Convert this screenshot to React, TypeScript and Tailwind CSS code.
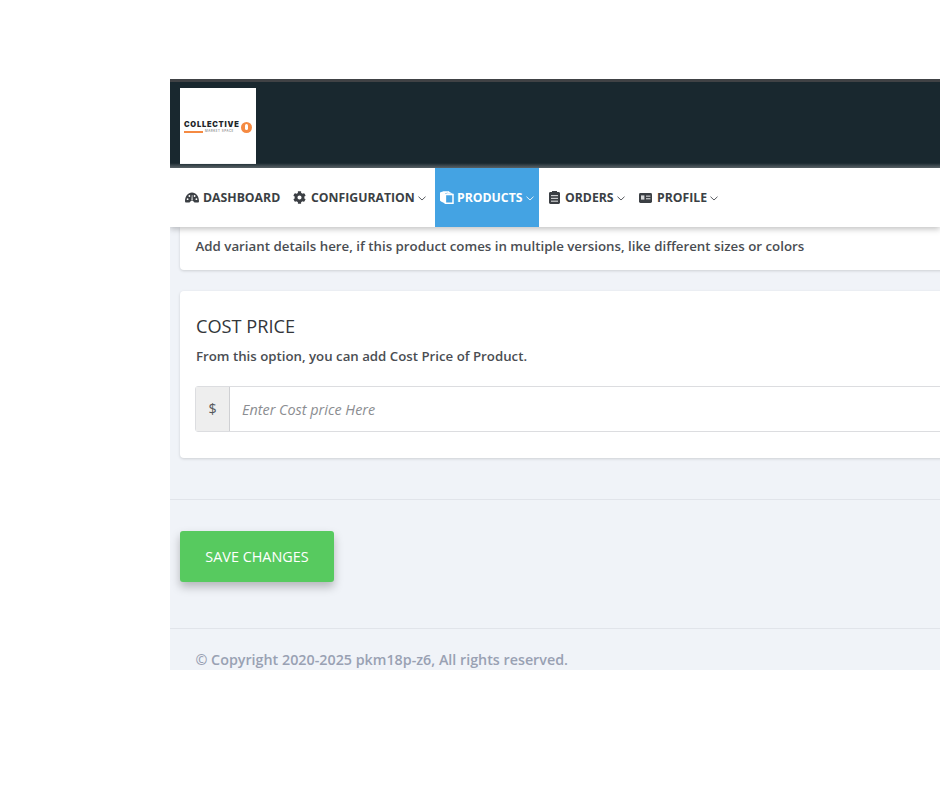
import { FaCog } from "react-icons/fa";

function DashIcon() {
  return (
    <svg viewBox="0 0 14 11" className="w-[14px] h-[11px]">
      <path d="M0 9.2C0 4.2 3 .4 7 .4s7 3.8 7 8.8c0 .9-.5 1.4-1.3 1.4H9.4C9.2 9.6 8.3 9 7 9s-2.2.6-2.4 1.6H1.3C.5 10.6 0 10.1 0 9.2z" fill="currentColor" />
      <circle cx="2.6" cy="7.2" r=".9" fill="#fff" />
      <circle cx="4.4" cy="4" r=".9" fill="#fff" />
      <circle cx="9.6" cy="4" r=".9" fill="#fff" />
      <circle cx="11.4" cy="7.2" r=".9" fill="#fff" />
      <path d="M6.4 8.6L6.9 3h.4l.4 5.6z" fill="#fff" />
    </svg>
  );
}

function BoxIcon() {
  return (
    <svg viewBox="0 0 14 13" className="w-[14px] h-[13px]">
      <path d="M0 1.6L3.4.2h5.2l.9.6-4.4 1.8v9.8L1 10.6 0 9.6z" fill="currentColor" />
      <path d="M5.4 3.4l7.6 0v8.8H5.4z" fill="none" stroke="currentColor" strokeWidth="1.5" />
      <path d="M8.6.4L13 2.8H6z" fill="currentColor" />
    </svg>
  );
}

function OrdersIcon() {
  return (
    <svg viewBox="0 0 11 13" className="w-[11px] h-[13px]">
      <path d="M3 0h5v1h1.6c.8 0 1.4.6 1.4 1.4v9.2c0 .8-.6 1.4-1.4 1.4H1.4C.6 13 0 12.4 0 11.6V2.4C0 1.6.6 1 1.4 1H3z" fill="currentColor" />
      <rect x="2" y="4" width="7" height="1.2" fill="#fff" opacity=".75" />
      <rect x="2" y="6.8" width="7" height="1.2" fill="#fff" opacity=".75" />
      <rect x="2" y="9.6" width="7" height="1.2" fill="#fff" opacity=".75" />
    </svg>
  );
}

function ProfileIcon() {
  return (
    <svg viewBox="0 0 13 10" className="w-[13px] h-[10px]">
      <rect width="13" height="10" rx="1.4" fill="currentColor" />
      <rect x="2" y="2.4" width="3.4" height="4.2" fill="#fff" opacity=".8" />
      <rect x="7" y="2.6" width="4.4" height="1.1" fill="#fff" opacity=".8" />
      <rect x="7" y="5.2" width="4.4" height="1.1" fill="#fff" opacity=".8" />
    </svg>
  );
}

function Caret() {
  return (
    <svg viewBox="0 0 8 5" fill="none" stroke="currentColor" strokeWidth="0.85" className="w-[8px] h-[5px] ml-[3px] mt-[2px] shrink-0">
      <polyline points="0.5 0.7 4 4 7.5 0.7" />
    </svg>
  );
}

const NAV = [
  { label: "DASHBOARD", icon: <DashIcon />, caret: false, active: false, cls: "w-[108px] pl-[5px]", box: "w-[18px]" },
  { label: "CONFIGURATION", icon: <FaCog className="w-[13px] h-[13px]" />, caret: true, active: false, cls: "w-[147px] pl-[5px]", box: "w-[18px]" },
  { label: "PRODUCTS", icon: <BoxIcon />, caret: true, active: true, cls: "w-[104px] pl-[5px]", box: "w-[17px]" },
  { label: "ORDERS", icon: <OrdersIcon />, caret: true, active: false, cls: "w-[90px] pl-[10px]", box: "w-[16px]" },
  { label: "PROFILE", icon: <ProfileIcon />, caret: true, active: false, cls: "w-[90px] pl-[10px]", box: "w-[18px]" },
];

function Logo() {
  return (
    <div className="w-[76px] h-[76px] bg-white flex flex-col justify-center pl-1 shrink-0">
      <div className="flex items-center gap-[1px] mt-[2px]">
        <div className="flex flex-col items-start w-[56px]">
          <span className="text-[7.5px] leading-[8px] font-black tracking-[0.75px] text-[#22262a] font-['Inter',sans-serif]">COLLECTIVE</span>
          <div className="flex items-center gap-[2px] mt-[1px]">
            <div className="w-[19px] h-[2px] bg-[#f58a42]" />
            <span className="text-[3px] leading-[3px] tracking-[0.5px] text-[#666] font-['Inter',sans-serif]">MARKET SPACE</span>
          </div>
        </div>
        <div className="w-[11px] h-[11px] rounded-full bg-[#f58a42] flex items-center justify-center">
          <div className="w-[3px] h-[6px] rounded-sm bg-white" />
        </div>
      </div>
    </div>
  );
}

export default function App() {
  return (
    <div className="w-[940px] h-[788px] overflow-hidden bg-white pt-[79px] pl-[170px] font-['Open_Sans',sans-serif]">
      <div className="w-[770px] h-[591px] overflow-hidden bg-[#f0f3f8] flex flex-col">
        {/* Top bar */}
        <header className="relative h-[89px] shrink-0 bg-[#19282f] border-t-[3px] border-[#404245] pl-[10px] pt-[6px]">
          <Logo />
          {/* soft fade where the bar meets the nav */}
          <div className="absolute left-0 right-0 bottom-0 h-[5px] bg-gradient-to-b from-transparent to-[#7c8387]/70" />
        </header>

        {/* Nav */}
        <nav className="relative z-10 h-[59px] shrink-0 bg-white shadow-[0_2px_6px_rgba(0,0,0,0.25)] flex pl-[10px]">
          {NAV.map((item) => (
            <div
              key={item.label}
              className={`${item.cls} flex items-center text-[12.25px] font-bold ${
                item.active ? "bg-[#44a3e3] text-white" : "text-[#3b3f44]"
              }`}
            >
              <span className={`${item.box} flex items-center shrink-0`}>{item.icon}</span>
              <span className="pt-[1px]">{item.label}</span>
              {item.caret && <Caret />}
            </div>
          ))}
        </nav>

        {/* Content */}
        <main className="flex-1 flex flex-col">
          <div className="ml-[10px] w-[800px] h-[43px] bg-white rounded-b-[4px] shadow-[0_1px_3px_rgba(0,0,0,0.15)] pl-[15.5px] pt-[9px] text-[13.3px] leading-[20px] font-semibold text-[#4a4d52]">
            Add variant details here, if this product comes in multiple versions, like different sizes or colors
          </div>

          <section className="ml-[10px] mt-[21px] w-[800px] h-[167px] bg-white rounded-[4px] shadow-[0_1px_3px_rgba(0,0,0,0.15)] pl-[15px] pt-[24px]">
            <h2 className="pl-[1px] text-[18.2px] leading-[22px] text-[#33363a]">COST PRICE</h2>
            <p className="pl-[1px] mt-[9px] text-[13.25px] leading-[20px] font-semibold text-[#4a4d52]">
              From this option, you can add Cost Price of Product.
            </p>
            <div className="mt-[20px] h-[46px] flex border border-[#dcdde0] rounded-[3px]">
              <div className="w-[34px] bg-[#eeeeee] border-r border-[#cfd0d3] flex items-center justify-center text-[14.3px] text-[#55585c]">
                $
              </div>
              <div className="flex-1 flex items-center pl-[12px] pt-[1px] text-[14.4px] italic text-[#8b8d91]">
                Enter Cost price Here
              </div>
            </div>
          </section>

          <div className="mt-[41px] border-t border-[#e1e4ea] pl-[10px] pt-[31px] h-[129px]">
            <button className="w-[154px] h-[51px] bg-[#57ca5f] rounded-[3px] text-white text-[14.4px] shadow-[0_5px_10px_rgba(0,0,0,0.25)]">
              SAVE CHANGES
            </button>
          </div>

          <footer className="border-t border-[#e1e4ea] pl-[25.5px] pt-[21px] text-[14.3px] leading-[20px] font-semibold text-[#99a1b3]">
            © Copyright 2020-2025 pkm18p-z6, All rights reserved.
          </footer>
        </main>
      </div>
    </div>
  );
}
